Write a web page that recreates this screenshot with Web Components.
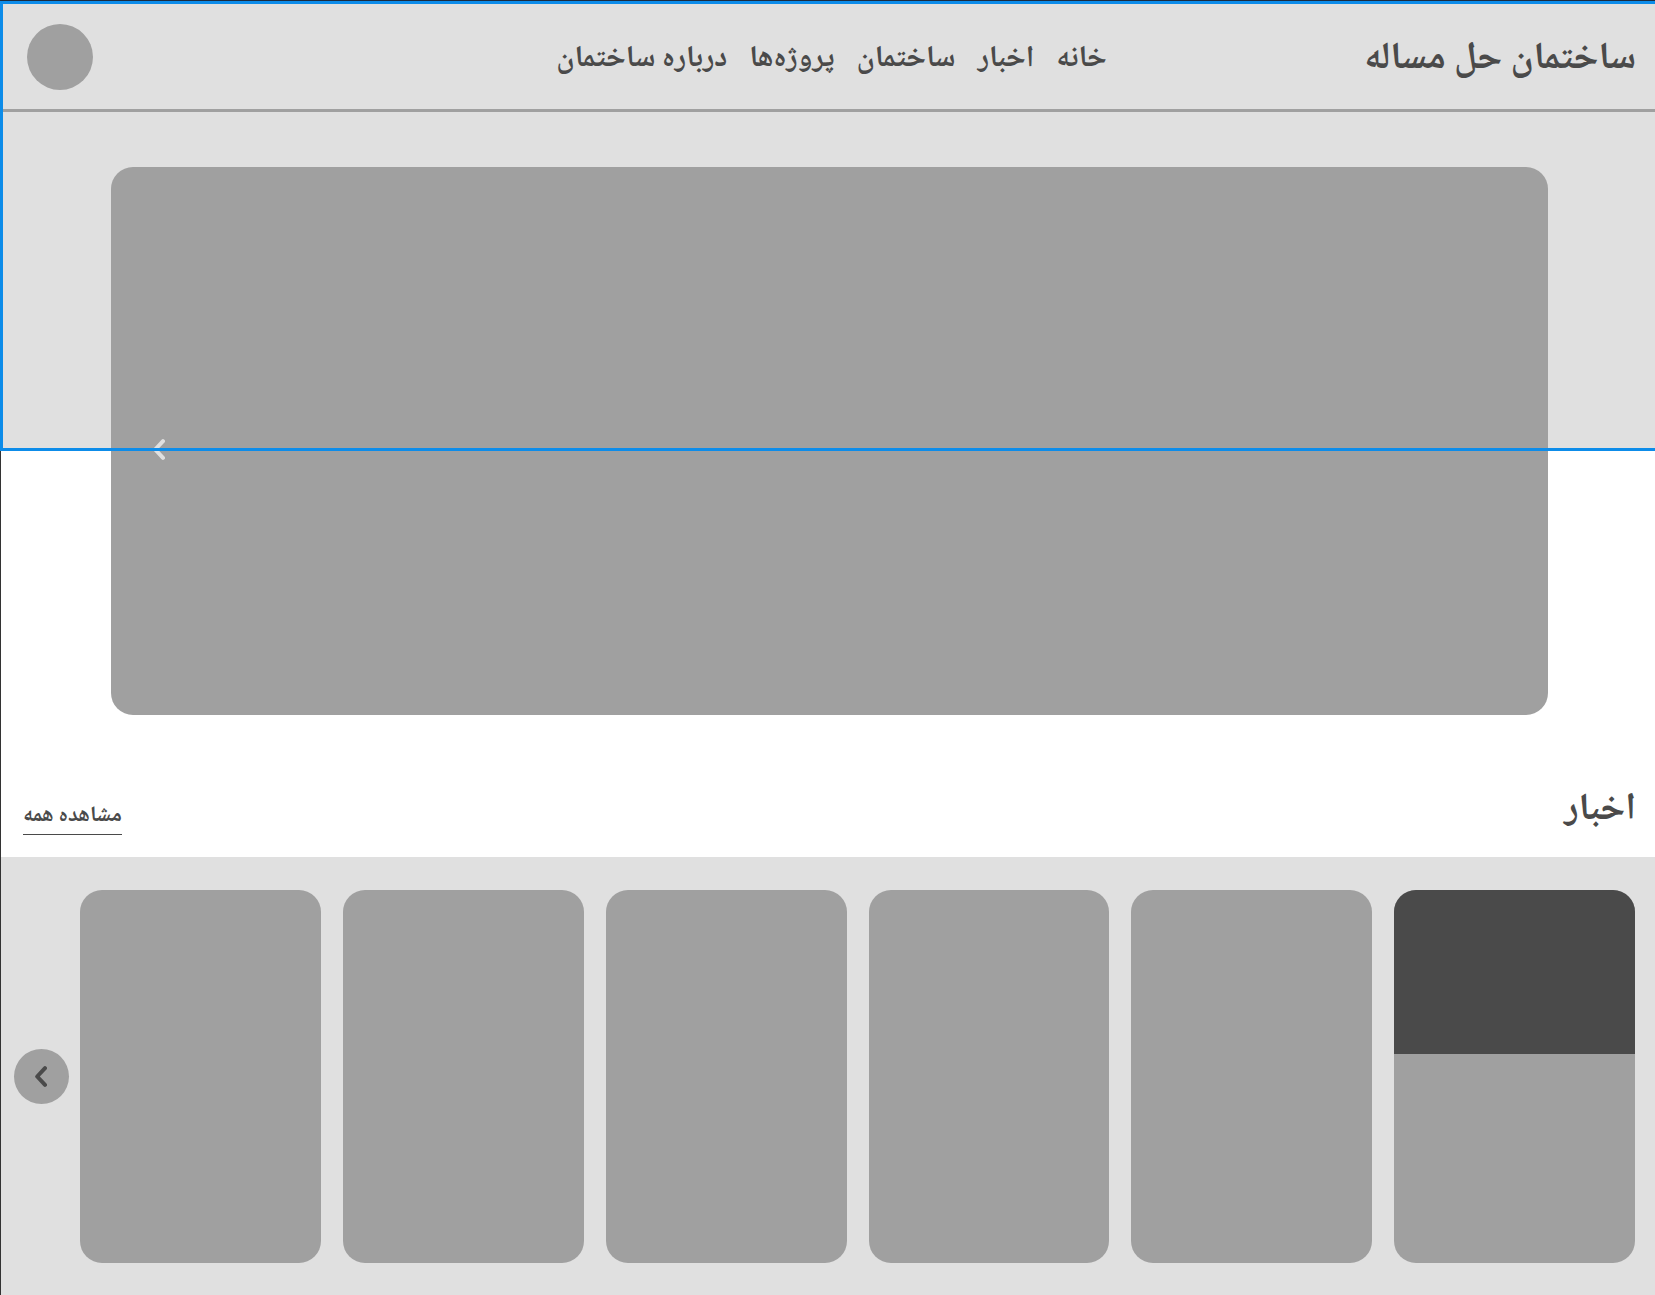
<!DOCTYPE html>
<html lang="fa" dir="rtl">
<head>
<meta charset="utf-8">
<meta name="viewport" content="width=device-width, initial-scale=1">
<title>ساختمان حل مساله</title>
<style>
  html { height: 100%; }
  body {
    margin: 0;
    min-height: 100%;
    background: #fff;
    color: #4a4a4a;
    font-family: "Noto Naskh Arabic", "DejaVu Sans", sans-serif;
  }
</style>
</head>
<body>
<building-page></building-page>

<script>
const define = (name, html) => {
  const template = document.createElement('template');
  template.innerHTML = html;
  customElements.define(name, class extends HTMLElement {
    constructor() {
      super();
      this.attachShadow({ mode: 'open' }).append(template.content.cloneNode(true));
    }
  });
};

define('chevron-icon', `
  <style>
    :host { display: block; width: 12px; height: 21px; }
    svg { display: block; width: 100%; height: 100%; }
  </style>
  <svg viewBox="0 0 12 21" fill="none" stroke="currentColor" stroke-width="4" stroke-linecap="round" stroke-linejoin="round" aria-hidden="true">
    <path d="M10 2.2 2.2 10.5 10 18.8"/>
  </svg>`);

define('nav-link', `
  <style>
    :host { display: block; }
    a { color: inherit; text-decoration: none; white-space: nowrap; }
  </style>
  <a href="#"><slot></slot></a>`);

define('site-header', `
  <style>
    :host { display: block; border-bottom: 3px solid #a0a0a0; }
    header {
      display: grid;
      grid-template-columns: 1fr auto 1fr;
      align-items: center;
      height: 105px;
      padding: 0 19px 0 26px;
      box-sizing: border-box;
    }
    h1, nav { margin: 0; padding-top: 6px; line-height: 48px; font-weight: 700; white-space: nowrap; }
    h1 { font-size: 38px; }
    nav { display: flex; gap: 22px; font-size: 30px; }
    button {
      justify-self: end;
      width: 66px; height: 66px;
      padding: 0; border: 0; border-radius: 50%;
      background: #a0a0a0;
    }
  </style>
  <header>
    <h1><slot name="title"></slot></h1>
    <nav><slot></slot></nav>
    <button type="button" aria-label="حساب کاربری"></button>
  </header>`);

define('hero-slider', `
  <style>
    :host { display: block; padding: 55px 107px 0 110px; }
    section {
      display: flex;
      align-items: center;
      justify-content: flex-end;
      height: 548px;
      padding: 0 42px;
      box-sizing: border-box;
      border-radius: 22px;
      background: #a0a0a0;
    }
    button { padding: 0; border: 0; background: none; color: #e0e0e0; margin-top: 16px; }
  </style>
  <section>
    <button type="button" aria-label="بعدی"><chevron-icon></chevron-icon></button>
  </section>`);

define('section-heading', `
  <style>
    :host {
      display: flex;
      justify-content: space-between;
      align-items: flex-end;
      height: 142px;
      padding: 0 19px 22px 22px;
      box-sizing: border-box;
    }
    h2 { margin: 0; font-size: 38px; line-height: 48px; font-weight: 700; }
    a {
      color: inherit; text-decoration: none;
      font-size: 22px; line-height: 36px; font-weight: 700;
      border-bottom: 1px solid #4a4a4a;
      white-space: nowrap;
    }
  </style>
  <h2><slot></slot></h2>
  <a href="#"><slot name="more"></slot></a>`);

define('news-card', `
  <style>
    :host {
      display: block;
      flex: 1;
      height: 373px;
      border-radius: 22px;
      overflow: hidden;
      background: #a0a0a0;
    }
    :host([featured]) div { height: 164px; background: #4a4a4a; }
  </style>
  <div></div>`);

define('news-row', `
  <style>
    :host {
      display: flex;
      align-items: center;
      gap: 11px;
      padding: 33px 20px 32px 13px;
      background: #e0e0e0;
    }
    .cards { display: flex; flex: 1; gap: 22px; }
    button {
      display: grid;
      place-items: center;
      width: 55px; height: 55px;
      padding: 0 0 0 2px; border: 0; border-radius: 50%;
      background: #a0a0a0;
      color: #4a4a4a;
    }
    chevron-icon { margin-right: 4px; }
  </style>
  <div class="cards"><slot></slot></div>
  <button type="button" aria-label="خبرهای بعدی"><chevron-icon></chevron-icon></button>`);

/* Outline of the selected artboard; floats over the page content. */
define('selection-frame', `
  <style>
    :host {
      position: absolute;
      inset: 0 0 auto -1px;
      height: 450px;
      box-sizing: border-box;
      border: solid #0d8ce9;
      border-width: 3px 0 3px 3px;
      pointer-events: none;
    }
  </style>`);

define('building-page', `
  <style>
    :host {
      display: block;
      position: relative;
      border-top: 1px solid #1b2c3f;
      border-left: 1px solid #333;
      background: linear-gradient(#e0e0e0 449px, #fff 449px);
    }
    site-header { padding-top: 3px; }
  </style>
  <site-header>
    <span slot="title">ساختمان حل مساله</span>
    <nav-link>خانه</nav-link>
    <nav-link>اخبار</nav-link>
    <nav-link>ساختمان</nav-link>
    <nav-link>پروژه‌ها</nav-link>
    <nav-link>درباره ساختمان</nav-link>
  </site-header>
  <main>
    <hero-slider></hero-slider>
    <section-heading>اخبار<span slot="more">مشاهده همه</span></section-heading>
    <news-row>
      <news-card featured></news-card>
      <news-card></news-card>
      <news-card></news-card>
      <news-card></news-card>
      <news-card></news-card>
      <news-card></news-card>
    </news-row>
  </main>
  <selection-frame></selection-frame>`);
</script>
</body>
</html>
